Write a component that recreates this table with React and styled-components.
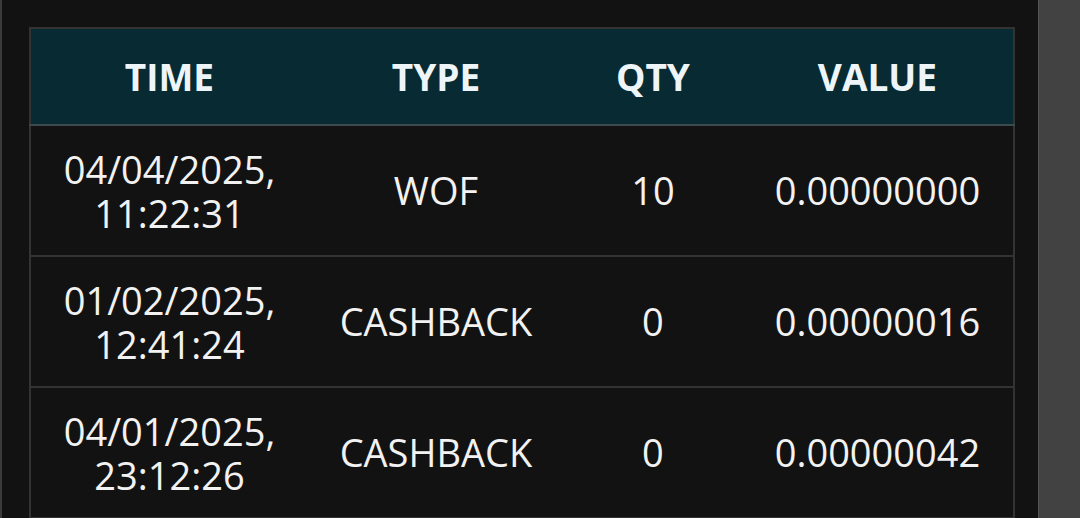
import React from 'react'
import styled, { createGlobalStyle } from 'styled-components'

const GlobalStyle = createGlobalStyle`
  html, body {
    margin: 0;
    padding: 0;
    background: #121212;
    overflow: hidden;
  }
`

const rows = [
  { date: '04/04/2025,', time: '11:22:31', type: 'WOF', qty: '10', value: '0.00000000' },
  { date: '01/02/2025,', time: '12:41:24', type: 'CASHBACK', qty: '0', value: '0.00000016' },
  { date: '04/01/2025,', time: '23:12:26', type: 'CASHBACK', qty: '0', value: '0.00000042' },
]

function App() {
  return (
    <Page>
      <GlobalStyle />
      <LeftEdge />
      <Main>
        <Table>
          <colgroup>
            <col style={{ width: 278 }} />
            <col style={{ width: 256 }} />
            <col style={{ width: 178 }} />
            <col style={{ width: 272 }} />
          </colgroup>
          <thead>
            <tr>
              <Th>TIME</Th>
              <Th>TYPE</Th>
              <Th>QTY</Th>
              <Th>VALUE</Th>
            </tr>
          </thead>
          <tbody>
            {rows.map((r, i) => (
              <Row key={i}>
                <Td>
                  <Line>{r.date}</Line>
                  <Line>{r.time}</Line>
                </Td>
                <Td>{r.type}</Td>
                <Td>{r.qty}</Td>
                <Td>{r.value}</Td>
              </Row>
            ))}
          </tbody>
        </Table>
      </Main>
      <RightPanel />
    </Page>
  )
}

export default App

const Page = styled.div`
  display: flex;
  height: 100vh;
  background: #121212;
  font-family: "Open Sans", "Noto Sans", sans-serif;
`

const LeftEdge = styled.div`
  width: 2px;
  background: #3a3a3a;
`

const Main = styled.div`
  flex: 1;
  padding: 27px 23px 0 27px;
`

const Table = styled.table`
  width: 984px;
  table-layout: fixed;
  border-collapse: collapse;
  border: 2px solid #333;
`

const Th = styled.th`
  height: 95px;
  padding: 0;
  background: #072a33;
  color: #eef5f8;
  font-size: 37px;
  font-weight: 700;
  text-align: center;
  border-bottom: 2px solid #3d4a4d;
`

const Row = styled.tr`
  border-bottom: 2px solid #333;
`

const Td = styled.td`
  height: 129px;
  padding: 0;
  color: #f2f2f2;
  font-size: 38px;
  line-height: 45px;
  text-align: center;
  background: #121212;
`

const Line = styled.div`
  line-height: 44px;
`

const RightPanel = styled.div`
  width: 42px;
  background: #424242;
  border-left: 1px solid #555;
`
